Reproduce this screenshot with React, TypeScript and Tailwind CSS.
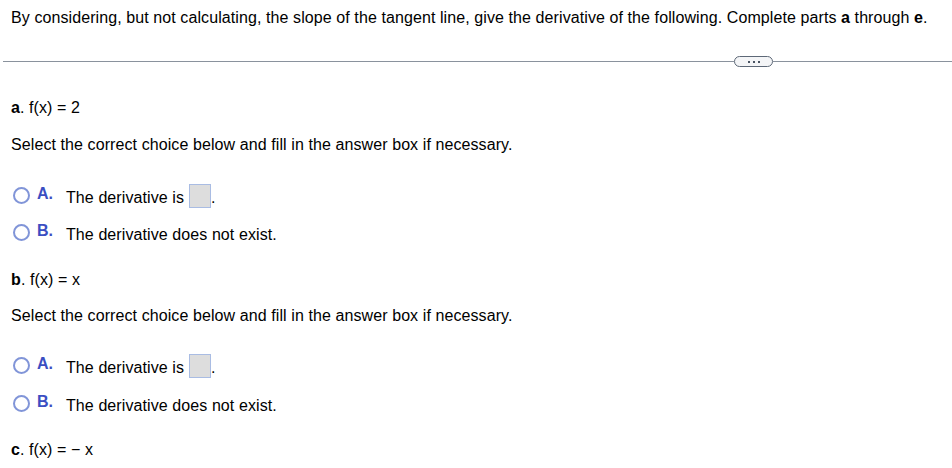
const FONT = "font-['Liberation_Sans',Arial,sans-serif]";

function Radio() {
  return (
    <span className="mt-[-2px] block h-[17px] w-[17px] shrink-0 rounded-full border-2 border-[#8195d8] bg-white" />
  );
}

function AnswerBox() {
  return (
    <span className="mt-[-4.5px] ml-[5px] block h-[24px] w-[22px] shrink-0 border border-[#a9bce3] bg-[#dddddd]" />
  );
}

function Choice({
  letter,
  withBox,
  text,
  className,
}: {
  letter: string;
  withBox?: boolean;
  text: string;
  className?: string;
}) {
  return (
    <div className={["flex h-[18px] items-start pl-[13px]", className].join(" ")}>
      <Radio />
      <span className="ml-[7px] mt-[-3.5px] w-[29px] text-[16px] font-bold leading-[18px] tracking-normal text-[#3b4ec2]">
        {letter}.
      </span>
      <span>{text}</span>
      {withBox && (
        <>
          <AnswerBox />
          <span>.</span>
        </>
      )}
    </div>
  );
}

function PartLabel({ part, fx, className }: { part: string; fx: string; className?: string }) {
  return (
    <div className={["pl-[11px]", className].join(" ")}>
      <span className="font-bold">{part}</span>. f(x) = {fx}
    </div>
  );
}

export default function App() {
  return (
    <main className={`${FONT} h-[468px] w-[952px] overflow-hidden bg-white text-[16px] leading-[18px] tracking-[0.09px] text-black`}>
      <div className="pl-[11px] pt-[8.5px]">
        By considering, but not calculating, the slope of the tangent line, give the derivative of the following. Complete parts{" "}
        <span className="font-bold">a</span> through <span className="font-bold">e</span>.
      </div>

      <div className="ml-[3px] mt-[29.5px] flex h-[11px] items-center">
        <div className="h-px flex-1 bg-[#8a929d]" />
        <button
          type="button"
          className="flex h-[11px] w-[39px] items-center justify-center gap-[3px] rounded-full border border-[#5d6877] bg-[#f4f5f7]"
        >
          <span className="h-[2px] w-[2px] bg-[#4a5463]" />
          <span className="h-[2px] w-[2px] bg-[#4a5463]" />
          <span className="h-[2px] w-[2px] bg-[#4a5463]" />
        </button>
        <div className="h-px w-[179px] bg-[#8a929d]" />
      </div>

      <PartLabel part="a" fx="2" className="mt-[31.5px]" />
      <div className="mt-[19px] pl-[11px]">Select the correct choice below and fill in the answer box if necessary.</div>
      <Choice letter="A" text="The derivative is" withBox className="mt-[35px]" />
      <Choice letter="B" text="The derivative does not exist." className="mt-[19px]" />

      <PartLabel part="b" fx="x" className="mt-[27px]" />
      <div className="mt-[18px] pl-[11px]">Select the correct choice below and fill in the answer box if necessary.</div>
      <Choice letter="A" text="The derivative is" withBox className="mt-[34px]" />
      <Choice letter="B" text="The derivative does not exist." className="mt-[20px]" />

      <PartLabel part="c" fx={"\u2212 x"} className="mt-[26px]" />
    </main>
  );
}
